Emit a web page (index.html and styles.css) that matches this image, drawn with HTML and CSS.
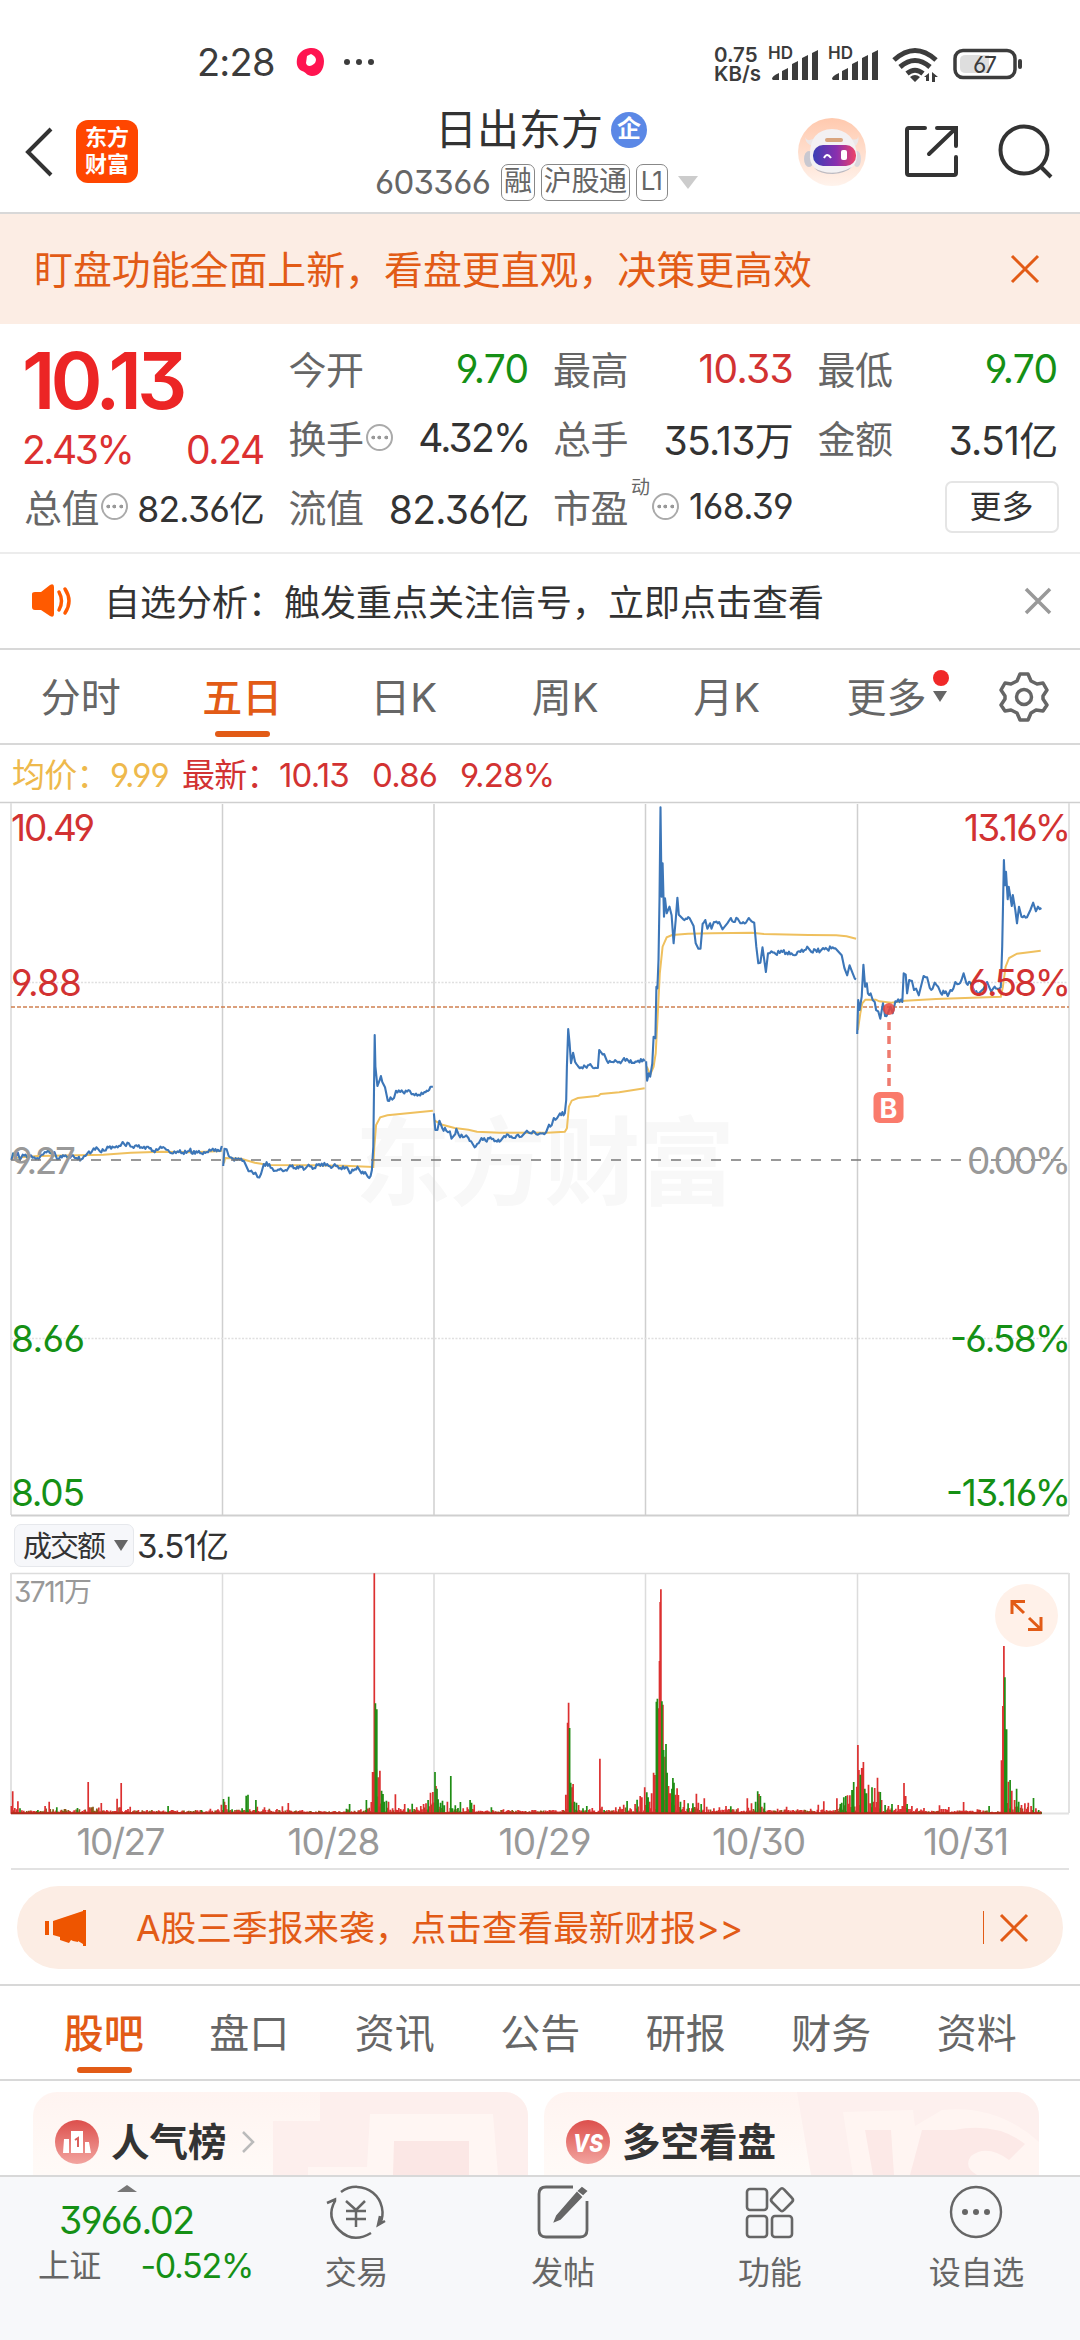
FILE: index.html
```html
<!DOCTYPE html>
<html lang="zh-CN">
<head>
<meta charset="utf-8">
<title>日出东方 603366</title>
<link rel="stylesheet" href="styles.css">
</head>
<body>
<div class="statusbar">
  <span class="clock">2:28</span>
  <svg class="status-app" width="80" height="36" viewBox="0 0 80 36"><path d="M14 4C22 3 28 9 28 17C28 26 23 32 16 32C11 32 10 28 6 27C2 25 0 21 1 15C2 9 7 5 14 4Z" fill="#ff1450"/><path d="M11 12L15 10C20 13 21 15 19 19C15 23 11 23 10 19Z" fill="#fff"/><g fill="#3c3c3c"><circle cx="51" cy="18" r="3"/><circle cx="63" cy="18" r="3"/><circle cx="75" cy="18" r="3"/></g></svg>
  <div class="netspeed"><span>0.75</span><span>KB/s</span></div>
  <svg class="signals" width="254" height="40" viewBox="0 0 254 40" fill="#3c3c3c">
    <text x="-1" y="16.500" class="hd">HD</text>
    <path d="M3 37q0-3 7-6v7H4zM13 29l6-3v12h-6zM23 22l6-3v19h-6zM33 16l6-3v25h-6zM43 11l6-3v30h-6z"/>
    <text x="59" y="16.500" class="hd">HD</text>
    <path d="M63 37q0-3 7-6v7h-6zM73 29l6-3v12h-6zM83 22l6-3v19h-6zM93 16l6-3v25h-6zM103 11l6-3v30h-6z"/>
    <g fill="none" stroke="#3c3c3c" stroke-width="5"><path d="M125 18Q146 -1 167 18"/><path d="M131 25Q146 12 161 25"/><path d="M138 31.500Q146 25 154 31.500" /></g>
    <path d="M141 35q5-4 10 0l-5 5zM160 31v8h-3v-4h-2zM163 30l6 5h-3v5h-3z"/>
    <rect x="186" y="8.500" width="60" height="27" rx="8" fill="none" stroke="#3c3c3c" stroke-width="3.500"/>
    <path d="M197 13h23v18h-23q-6 0-6-5v-8q0-5 6-5z" fill="#dedede"/>
    <rect x="249" y="17" width="4" height="10" rx="2"/>
    <text x="204" y="31" class="batt">67</text>
  </svg>
</div>

<header class="header">
  <svg class="back" width="28" height="50" viewBox="0 0 28 50"><path d="M26 2L3 25L26 48" fill="none" stroke="#333" stroke-width="4"/></svg>
  <div class="brand">东方<br>财富</div>
  <div class="heading">
    <div class="title">日出东方<span class="corp">企</span></div>
    <div class="sub"><span class="code">603366</span><span class="tag">融</span><span class="tag">沪股通</span><span class="tag tag-l1">L1</span><i class="drop"></i></div>
  </div>
  <svg class="robot" width="68" height="68" viewBox="0 0 68 68">
    <defs><linearGradient id="rb" x1="0" y1="0" x2="0" y2="1"><stop offset="0" stop-color="#ffc9ae"/><stop offset="1" stop-color="#fff3ec"/></linearGradient><linearGradient id="rv"><stop offset="0" stop-color="#3a3fb5"/><stop offset=".55" stop-color="#8a2fae"/><stop offset="1" stop-color="#ee4468"/></linearGradient></defs>
    <circle cx="34" cy="34" r="34" fill="url(#rb)"/>
    <path d="M7 19q2 5 8 2v7q-7-1-8-9zM60 17q1 6-7 4l3 8q6-4 4-12z" fill="#ece7e8"/>
    <ellipse cx="11" cy="41" rx="5" ry="8" fill="#c9c8d0"/><ellipse cx="59" cy="41" rx="4" ry="8" fill="#d9d6dc"/>
    <path d="M12 36Q12 12 34 11Q56 12 59 36Q60 54 35 55Q10 54 12 36Z" fill="#f3f1f3"/>
    <path d="M16 50Q34 60 54 49Q48 55 35 56Q22 56 16 50Z" fill="#bdbbc2"/>
    <rect x="15" y="27" width="43" height="21" rx="10" fill="url(#rv)"/><rect x="27" y="20" width="18" height="4" rx="2" fill="#d9a57f"/>
    <path d="M26 40q3-6 7 0" fill="none" stroke="#fff" stroke-width="2"/><rect x="43" y="32" width="6" height="10" rx="2" fill="#fff"/>
  </svg>
  <svg class="share" width="54" height="54" viewBox="0 0 54 54"><path d="M21 3H5Q3 3 3 5V48Q3 50 5 50H50Q52 50 52 48V32M33 3H52V21M51 4L25 29" fill="none" stroke="#333" stroke-width="4" stroke-linecap="round"/></svg>
  <svg class="search" width="56" height="56" viewBox="0 0 56 56"><circle cx="26" cy="26" r="23.500" fill="none" stroke="#333" stroke-width="4"/><path d="M42 42L53 53" stroke="#333" stroke-width="4"/></svg>
</header>

<div class="banner"><span class="banner-text">盯盘功能全面上新，看盘更直观，决策更高效</span><svg width="30" height="30" viewBox="0 0 30 30"><path d="M2 2L28 28M28 2L2 28" stroke="#e25b16" stroke-width="3"/></svg></div>

<section class="quote">
  <div class="lead"><div class="price">10.13</div><div class="change"><span class="pct">2.43%</span><span>0.24</span></div></div>
  <div class="stat"><span class="k">今开</span><span class="v down">9.70</span></div>
  <div class="stat"><span class="k">最高</span><span class="v up">10.33</span></div>
  <div class="stat"><span class="k">最低</span><span class="v down">9.70</span></div>
  <div class="stat"><span class="k">换手</span><i class="info"></i><span class="v tight">4.32%</span></div>
  <div class="stat"><span class="k">总手</span><span class="v">35.13万</span></div>
  <div class="stat"><span class="k">金额</span><span class="v">3.51亿</span></div>
  <div class="stat"><span class="k">总值</span><i class="info"></i><span class="v small">82.36亿</span></div>
  <div class="stat"><span class="k">流值</span><span class="v">82.36亿</span></div>
  <div class="stat"><span class="k">市盈</span><sup class="dyn">动</sup><i class="info"></i><span class="v small">168.39</span></div>
  <div class="stat"><span class="more">更多</span></div>
</section>

<div class="alert">
  <svg width="42" height="34" viewBox="0 0 42 34"><path d="M1 10Q1 8 4 8H10L19 1Q23-1 23 3V30Q23 34 19 32L10 26H4Q1 26 1 23Z" fill="#ff5a00"/><path d="M28 8Q33 17 28 26M34 5Q42 17 34 29" fill="none" stroke="#ff5a00" stroke-width="3.500" stroke-linecap="round"/></svg>
  <span class="alert-text">自选分析：触发重点关注信号，立即点击查看</span>
  <svg width="28" height="28" viewBox="0 0 28 28"><path d="M2 2L26 26M26 2L2 26" stroke="#999" stroke-width="3.500"/></svg>
</div>

<nav class="periods">
  <span class="tab">分时</span><span class="tab active">五日</span><span class="tab">日K</span><span class="tab">周K</span><span class="tab">月K</span>
  <span class="tab tab-more">更多<i class="dot"></i><i class="tri"></i></span>
  <svg class="gear" width="50" height="50" viewBox="0 0 50 50" fill="none" stroke="#666" stroke-width="3.500" stroke-linejoin="round"><path d="M21 2H29L32 9L38 12L44 11L48 18L44 24V27L48 33L44 39L37 38L32 41L29 48H21L18 41L12 38L6 39L2 33L6 27V24L2 18L6 11L12 12L18 9Z"/><circle cx="25" cy="25" r="7.500"/></svg>
</nav>

<div class="legend"><span class="avg">均价：</span><span class="avg n1">9.99</span><span class="up n2">最新：</span><span class="up n3">10.13</span><span class="up n4">0.86</span><span class="up n5">9.28%</span></div>

<svg class="price-chart" width="1080" height="716" viewBox="0 802 1080 716">
  <g class="mark"><text x="355" y="1197" textLength="380">东方财富</text></g>
  <path d="M0 802.500H1080" class="grid dark"/>
  <path d="M11 803V1515M1069 803V1515" class="edge"/>
  <path d="M222.500 804V1515M434 804V1515M645.500 804V1515M857.500 804V1515" class="grid dark"/>
  <path d="M11 1515.500H1069" class="grid dark wide"/>
  <path d="M11 982.500H1069M11 1338.500H1069" class="grid dots"/>
  <path d="M11 1007H1069" class="last"/>
  <g id="avg"></g><g id="price"></g>
  <path d="M11 1160H1069" class="zero"/>
  <circle cx="889" cy="1009" r="6" fill="#e8453c" opacity=".85"/>
  <path d="M889 1022V1094" stroke="#ee7b6f" stroke-width="3.500" stroke-dasharray="8 6"/>
  <rect x="873.500" y="1092" width="30" height="31" rx="6" fill="#fa7b6c"/>
  <text x="879.500" y="1117.500" class="buy">B</text>
  <g class="axis up-t"><text x="11" y="841" textLength="84">10.49</text><text x="11" y="996" textLength="71">9.88</text><text x="964" y="841" textLength="107">13.16%</text><text x="968" y="996" textLength="103">6.58%</text></g>
  <g class="axis flat-t"><text x="11" y="1173.500" textLength="65">9.27</text><text x="967" y="1173.500" textLength="104">0.00%</text></g>
  <g class="axis down-t"><text x="11" y="1351.500" textLength="74">8.66</text><text x="950" y="1351.500" textLength="121">-6.58%</text><text x="11" y="1506" textLength="74">8.05</text><text x="946" y="1506" textLength="125">-13.16%</text></g>
</svg>

<div class="volume-head"><span class="chip"><span>成交额</span><i class="tri"></i></span><span class="vol-value">3.51亿</span></div>

<svg class="volume-chart" width="1080" height="298" viewBox="0 1573 1080 298">
  <path d="M11 1573.500H1069M222.500 1573V1813M434 1573V1813M645.500 1573V1813M857.500 1573V1813" class="grid"/>
  <path d="M11 1573V1813M1069 1573V1813M11 1813.500H1069M11 1869H1069" class="edge"/>
  <g id="volume"></g>
  <text x="14" y="1602" textLength="78" class="vmax">3711万</text>
  <g class="dates" text-anchor="middle"><text x="121" y="1855" textLength="89">10/27</text><text x="334" y="1855" textLength="93">10/28</text><text x="545" y="1855" textLength="93">10/29</text><text x="759" y="1855" textLength="94">10/30</text><text x="966" y="1855" textLength="86">10/31</text></g>
  <circle cx="1026.500" cy="1615.500" r="31.500" fill="#fff1e9"/>
  <path d="M1012 1614V1601.500H1025M1012.500 1602L1024 1613M1041 1617V1629.500H1028M1040.500 1629L1029 1618" fill="none" stroke="#e25b16" stroke-width="3"/>
</svg>

<div class="promo">
  <svg width="42" height="36" viewBox="0 0 42 36" fill="#ee5500"><path d="M0 11H4V25H0zM8 11L38 1V0H41V36H38V34L33 31V32L28 31L26 30L24 33L15 30V27L8 25Z"/></svg>
  <span class="promo-text">A股三季报来袭，点击查看最新财报&gt;&gt;</span>
  <i class="sep"></i>
  <svg width="30" height="30" viewBox="0 0 30 30"><path d="M2 2L28 28M28 2L2 28" stroke="#e25b16" stroke-width="3"/></svg>
</div>

<nav class="sections"><span class="tab active">股吧</span><span class="tab">盘口</span><span class="tab">资讯</span><span class="tab">公告</span><span class="tab">研报</span><span class="tab">财务</span><span class="tab">资料</span></nav>

<div class="cards">
  <div class="card">
    <svg class="deco" width="255" height="83" viewBox="0 0 255 83"><path d="M47 0H255V83H0V29H47Z" fill="#fdefed"/><path d="M97 22H220L225 83H35V75H94Z" fill="#fff6f3"/><path d="M121 49H196V83H120Z" fill="#fbe7e5"/></svg>
    <svg class="badge" width="44" height="44" viewBox="0 0 44 44"><defs><linearGradient id="cg" x1="0" y1="0" x2="0" y2="1"><stop offset="0" stop-color="#dc4f4c"/><stop offset="1" stop-color="#f2a49f"/></linearGradient></defs><circle cx="22" cy="22" r="22" fill="url(#cg)"/><path d="M8 33L9 19H14V33ZM16 33V11H28V33ZM30 33V22H34L36 33Z" fill="#fff"/><path d="M20 20L23 18V27" fill="none" stroke="#d9605c" stroke-width="2"/></svg>
    <span class="card-title">人气榜</span>
    <svg class="chev" width="14" height="24" viewBox="0 0 14 24"><path d="M2 2L12 12L2 22" fill="none" stroke="#bbb" stroke-width="2.500"/></svg>
  </div>
  <div class="card">
    <svg class="deco" width="242" height="83" viewBox="0 0 242 83"><path d="M0 0H242V83H14Z" fill="#fdf0ee"/><path d="M46 20L116 18L118 34L145 18Q200 12 242 50V83H56Z" fill="#fff5f2"/><path d="M68 38H94L97 83H76ZM125 38H157Q200 30 228 52L212 68Q190 52 174 64Q166 75 180 83H113Z" fill="#fce9e7"/></svg>
    <svg class="badge" width="44" height="44" viewBox="0 0 44 44"><circle cx="22" cy="22" r="22" fill="url(#cg)"/><text x="7" y="32" class="vs" textLength="30" lengthAdjust="spacingAndGlyphs">VS</text></svg>
    <span class="card-title">多空看盘</span>
  </div>
</div>

<footer class="footer">
  <div class="index"><i class="up-tri"></i><div class="index-value">3966.02</div><div class="index-row"><span>上证</span><span class="index-pct">-0.52%</span></div></div>
  <div class="action"><svg width="64" height="56" viewBox="0 0 64 56" fill="none" stroke="#666" stroke-width="2.500"><path d="M17 8A26 26 0 0 1 56 40M3 19L11 15.500V17Q2 33 15 46Q29 60 47 49M61 37L54 41L56 32M22 17L32 26L41 17M32 26V43M22 27H42M22 35H42"/></svg><span>交易</span></div>
  <div class="action"><svg width="56" height="56" viewBox="0 0 56 56" fill="none" stroke="#666" stroke-width="2.800"><path d="M38 3H11Q4 3 4 10V46Q4 53 11 53H45Q52 53 52 46V17"/><path d="M47 4L51 7L48 10L44 7ZM42 9L46 13L25 35L20 37L22 32Z" fill="#666" stroke-width="2"/></svg><span>发帖</span></div>
  <div class="action"><svg width="56" height="56" viewBox="0 0 56 56" fill="none" stroke="#666" stroke-width="2.600"><rect x="5" y="5" width="20" height="21" rx="3"/><rect x="5" y="32" width="20" height="21" rx="3"/><rect x="30" y="32" width="20" height="21" rx="3"/><path d="M38 5.500Q40 3 42 5.500L50 14Q52 16 50 18L42 26Q40 28.500 38 26L30 18Q28 16 30 14Z"/></svg><span>功能</span></div>
  <div class="action"><svg width="56" height="56" viewBox="0 0 56 56"><circle cx="28" cy="28" r="25" fill="none" stroke="#666" stroke-width="2.400"/><g fill="#666"><circle cx="17" cy="28" r="3"/><circle cx="28" cy="28" r="3"/><circle cx="39" cy="28" r="3"/></g></svg><span>设自选</span></div>
</footer>
<script src="chart.js"></script>
</body>
</html>
```
FILE: styles.css
```css
* { box-sizing: border-box; }
body { margin: 0; width: 1080px; height: 2340px; overflow: hidden; background: #fff; color: #333; font-family: Inter, "Noto Sans CJK SC", sans-serif; font-feature-settings: "cv03", "cv04", "cv09"; display: flex; flex-direction: column; }
body > * { flex: none; }
svg { display: block; flex: none; overflow: visible; }
i { font-style: normal; display: block; flex: none; }
.up { color: #d23232; }
.down { color: #159015; }

.statusbar { height: 100px; padding: 24px 56px 0 197px; display: flex; align-items: center; color: #3c3c3c; }
.clock { font-size: 38px; line-height: 76px; width: 99px; letter-spacing: -0.8px; }
.netspeed { margin: 4px 0 0 338px; width: 55px; display: flex; flex-direction: column; font-size: 20.5px; line-height: 19.500px; font-weight: 600; }
.hd { font-size: 17px; font-weight: 600; }
.batt { font-size: 23px; letter-spacing: -1.5px; }

.header { height: 114px; border-bottom: 2px solid #d8d8d8; display: flex; align-items: flex-start; padding-left: 25px; }
.back { margin-top: 27px; }
.brand { margin: 20px 0 0 23px; width: 62px; height: 63px; border-radius: 12px; background: #ff4600; color: #fff; font-size: 22px; font-weight: 700; line-height: 27px; padding-top: 4px; text-align: center; }
.heading { width: 326px; margin-left: 237px; white-space: nowrap; }
.title { display: flex; align-items: center; font-size: 42px; line-height: 60px; padding-left: 60px; }
.corp { width: 36px; height: 36px; border-radius: 50%; background: #5b88e6; color: #fff; font-size: 24px; line-height: 34px; text-align: center; margin-left: 8px; font-weight: 700; }
.sub { display: flex; align-items: center; height: 44px; gap: 6px; color: #666; }
.code { font-size: 33px; width: 120px; letter-spacing: -0.7px; }
.tag { flex: none; border: 1.5px solid #888; border-radius: 7px; height: 37px; line-height: 32px; font-size: 28px; padding: 0 2px; letter-spacing: -0.3px; }
.tag-l1 { padding: 0 4px; width: 32px; font-size: 26px; letter-spacing: -2px; }
.drop { width: 0; border: 10px solid transparent; border-top: 13px solid #ccc; border-bottom: 0; margin-left: 4px; }
.robot { margin: 18px 0 0 97px; }
.share { margin: 25px 0 0 38px; }
.search { margin: 24px 0 0 40px; }

.banner { height: 110px; background: #fcede4; color: #e25b16; display: flex; align-items: center; justify-content: space-between; padding: 0 40px 0 34px; font-size: 38.9px; }
.banner-text { padding-bottom: 4px; }

.quote { height: 230px; border-bottom: 2px solid #ececec; padding: 10px 0 0 24px; display: grid; grid-template-columns: repeat(4, 240px); column-gap: 24.5px; grid-template-rows: repeat(3, 69px); }
.lead { grid-row: span 2; color: #ec2525; margin-left: -2px; }
.price { height: 92px; line-height: 92px; font-size: 79px; font-weight: 600; letter-spacing: -5px; }
.change { display: flex; justify-content: space-between; line-height: 48px; font-size: 39px; letter-spacing: -1.3px; color: #dc3030; }
.pct { letter-spacing: -2.5px; }
.stat { display: flex; align-items: center; height: 69px; white-space: nowrap; }
.k { font-size: 38px; color: #666; letter-spacing: -0.5px; padding-bottom: 3px; }
.v { margin-left: auto; font-size: 39px; letter-spacing: -0.7px; }
.tight { letter-spacing: -1.8px; margin-right: -1px; }
.small { font-size: 35.500px; letter-spacing: -0.7px; }
.info { width: 27px; height: 27px; border: 2px solid #aaa; border-radius: 50%; margin-left: 2px; background: radial-gradient(circle, #999 1.6px, transparent 2.2px) 50% 50% / 6.500px 7px no-repeat, radial-gradient(circle, #999 1.6px, transparent 2.2px) 2px 50% / 6.500px 7px no-repeat, radial-gradient(circle, #999 1.6px, transparent 2.2px) 15px 50% / 6.500px 7px no-repeat; }
.dyn { font-size: 19px; color: #666; margin: -38px 0 0 3px; line-height: 20px; }
.more { margin: 0 -1px 0 auto; width: 114px; height: 52px; line-height: 47px; border: 2px solid #e5e5e5; border-radius: 7px; text-align: center; font-size: 32px; }

.alert { height: 96px; border-bottom: 2px solid #d8d8d8; display: flex; align-items: center; padding: 0 28px 0 31px; font-size: 36px; }
.alert-text { margin-left: 31px; margin-right: auto; padding-bottom: 3px; }
.periods { height: 95px; border-bottom: 2px solid #d8d8d8; display: flex; align-items: flex-start; color: #666; }
.tab { position: relative; line-height: 95px; height: 93px; width: 161.5px; text-align: center; font-size: 40px; }
.active { color: #e25b16; font-weight: 500; }
.active::after { content: ""; position: absolute; left: 50%; margin-left: -27px; bottom: 6px; width: 55px; height: 6px; border-radius: 3px; background: #e25b16; }
.tab-more { text-align: left; padding-left: 39px; width: 191px; }
.tri { width: 0; border: 7.5px solid transparent; border-top: 11px solid #666; border-bottom: 0; }
.tab-more .tri { position: absolute; left: 125px; top: 41px; }
.dot { position: absolute; left: 125px; top: 20px; width: 16px; height: 16px; border-radius: 50%; background: #f02828; }
.gear { margin-top: 22px; }

.legend { height: 57px; display: flex; padding-left: 12px; line-height: 60px; font-size: 33px; letter-spacing: -0.8px; white-space: nowrap; }
.legend > span { flex: none; }
.avg { color: #eeb94c; width: 98px; }
.n1 { width: 72px; } .n2 { width: 97px; } .n3 { width: 93px; } .n4 { width: 88px; }

.grid { fill: none; stroke: #dcdcdc; stroke-width: 1.5; }
.dark { stroke: #cfcfcf; }
.wide { stroke-width: 2; }
.dots { stroke: #e0e0e0; stroke-dasharray: 2 1.5; }
.edge { fill: none; stroke: #e2e2e2; stroke-width: 2; }
.last { stroke: #d08050; stroke-width: 1.5; stroke-dasharray: 4 2; }
.zero { stroke: #777; stroke-width: 1.7; stroke-dasharray: 10 10; }
.mark text { font-size: 96px; font-weight: 700; fill: #f8f8f8; }
.buy { font-size: 27px; font-weight: 700; fill: #fff; }
.axis text { font-size: 37px; }
.up-t { fill: #d23232; } .flat-t { fill: #999; } .down-t { fill: #159015; }
#price polyline { fill: none; stroke: #3c76b8; stroke-width: 2.1; stroke-linejoin: round; }
#avg polyline { fill: none; stroke: #efc05e; stroke-width: 2; }

.volume-head { height: 55px; display: flex; align-items: center; padding-left: 14px; font-size: 33px; }
.chip { display: flex; align-items: center; width: 120px; height: 43px; background: #f6f7fa; border: 1.5px solid #e6e8ec; border-radius: 7px; font-size: 29px; letter-spacing: -2px; padding-left: 8px; }
.chip span { padding-bottom: 4px; }
.chip .tri { margin-left: 10px; }
.vol-value { margin-left: 3px; letter-spacing: -0.8px; padding-bottom: 4px; }
.vmax { font-size: 28px; fill: #999; }
.dates { font-size: 37px; fill: #999; }

.promo { margin: 15px 17px 0; height: 83px; border-radius: 42px; background: #fcede4; color: #e25b16; display: flex; align-items: center; padding: 0 34px 0 28px; font-size: 35.7px; }
.promo-text { margin: 0 auto 0 49px; padding-bottom: 4px; }
.sep { width: 1.5px; height: 33px; background: #e25b16; margin-right: 15px; }
.sections { margin-top: 15px; height: 97px; border-top: 2px solid #d8d8d8; border-bottom: 2px solid #d8d8d8; display: flex; padding-left: 31px; color: #666; }
.sections .tab { width: 145.5px; }
.cards { height: 94px; overflow: hidden; display: flex; gap: 16px; padding: 11px 33px 0; }
.card { position: relative; width: 495px; height: 110px; overflow: hidden; border-radius: 24px; background: linear-gradient(#fff4f1, #fffaf7 80px); display: flex; align-items: flex-start; padding: 28px 22px; }
.deco { position: absolute; right: 0; top: 0; }
.badge { position: relative; }
.vs { font-size: 25px; font-weight: 800; font-style: italic; fill: #fff; }
.card-title { position: relative; font-size: 38.5px; line-height: 44px; font-weight: 600; margin-left: 12px; }
.chev { position: relative; margin: 10px 0 0 14px; }
.footer { height: 166px; background: #f7f8fa; border-top: 2px solid #d8d8d8; display: flex; color: #666; }
.index { width: 253px; }
.up-tri { width: 0; border: 10px solid transparent; border-bottom: 7px solid #777; border-top: 0; margin: 8px 0 0 117px; }
.index-value { color: #159015; font-size: 37.5px; line-height: 44px; margin: 7px 0 0 59px; letter-spacing: -1.4px; }
.index-row { display: flex; justify-content: space-between; line-height: 46px; font-size: 32px; margin-left: 38px; letter-spacing: -0.8px; }
.index-pct { color: #159015; font-size: 34px; letter-spacing: -1.3px; }
.action { width: 206.7px; padding-top: 7px; display: flex; flex-direction: column; align-items: center; font-size: 32px; }
.action span { line-height: 46px; margin-top: 10px; letter-spacing: -0.3px; }
```
FILE: chart.js
```js
// Prices and volumes are [x, y] samples on a 3136-unit wide sheet.
const SX = 1080 / 3136, SY = 1 / 3;
const NS = 'http://www.w3.org/2000/svg';
let seed = 7;
const rnd = () => (seed = (seed * 16807) % 2147483647) / 2147483647;
const pairs = s => s.trim().split(/\s+/).map(p => p.split(',').map((v, i) => i < 2 ? +v : v));

const priceDays = [
  [0, '33,1080 38,1060 45,1072 52,1058 58,1080 66,1064 78,1072 90,1066 100,1072 112,1078 120,1064 130,1056 140,1050 148,1060 158,1056 166,1078 176,1068 190,1066 200,1070 212,1066 222,1074 236,1078 248,1068 258,1054 266,1056 272,1045 284,1046 290,1054 302,1052 312,1040 330,1042 350,1038 356,1026 362,1034 374,1030 384,1040 396,1036 410,1042 430,1040 445,1052 458,1050 466,1040 478,1044 488,1050 498,1060 515,1054 530,1058 545,1054 553,1046 556,1060 570,1054 585,1060 600,1056 612,1052 618,1046 640,1052 644,1038'],
  [0, '648,1098 652,1046 658,1048 664,1068 676,1076 700,1076 708,1082 714,1096 722,1114 730,1112 736,1122 742,1118 748,1132 758,1122 766,1092 782,1092 790,1104 800,1112 815,1106 822,1114 836,1106 842,1096 856,1104 870,1098 886,1106 896,1094 912,1104 926,1092 950,1092 962,1104 972,1092 988,1104 1008,1102 1016,1120 1030,1108 1038,1100 1046,1114 1060,1116 1068,1130 1076,1128 1080,1110 1084,1040 1088,705 1090,800 1096,858 1102,842 1106,828 1110,846 1118,862 1126,902 1134,892 1144,894 1150,872 1170,876 1190,872 1200,882 1216,884 1232,876 1246,870 1250,860 1257,860'],
  [0, '1260,940 1264,990 1270,990 1276,962 1284,984 1296,992 1306,994 1311,1016 1322,1002 1325,986 1332,1004 1344,1012 1354,1006 1360,1014 1368,1024 1378,1042 1390,1030 1398,1014 1410,1022 1424,1012 1440,1022 1454,1022 1464,1008 1476,1004 1492,1014 1504,1004 1514,1010 1530,992 1540,1000 1552,996 1562,1004 1568,1000 1576,1000 1586,996 1594,974 1602,976 1608,954 1618,954 1626,940 1640,940 1644,900 1646,800 1650,687 1654,730 1658,790 1664,758 1670,786 1678,798 1688,802 1700,800 1714,792 1722,804 1736,804 1740,750 1746,758 1754,762 1762,782 1778,786 1790,784 1802,790 1812,774 1824,782 1838,788 1853,782 1872,784'],
  [1568, '308,784 311,842 316,820 320,830 326,790 330,710 335,715 338,560 341,565 344,480 347,300 350,22 353,290 356,190 360,350 363,295 368,340 376,320 382,346 388,430 394,360 399,293 403,344 416,358 434,354 446,378 452,430 460,446 466,446 472,372 480,360 486,386 494,370 498,386 505,366 520,366 530,388 544,370 554,354 562,366 574,356 582,370 598,368 606,354 614,364 622,368 628,440 634,490 640,488 646,442 656,516 662,460 672,454 684,462 700,452 716,458 730,460 740,466 752,454 768,450 776,440 788,456 800,450 815,452 822,444 834,448 850,442 862,450 876,466 884,504 892,526 899,496 908,520 914,536 918,538'],
  [1568, '921,702 924,600 928,630 934,590 939,494 944,560 949,550 952,580 960,580 966,600 972,606 976,630 982,634 988,656 996,610 1002,648 1010,640 1018,620 1024,640 1032,604 1040,598 1052,606 1056,520 1062,524 1066,580 1072,540 1080,542 1086,570 1092,566 1100,586 1106,560 1114,528 1124,532 1132,564 1140,566 1146,548 1156,560 1164,580 1178,574 1184,588 1192,570 1200,566 1206,546 1216,552 1224,540 1230,520 1238,550 1250,548 1260,570 1274,580 1288,566 1298,546 1310,574 1320,560 1328,566 1338,562 1342,440 1347,180 1350,256 1353,215 1358,298 1361,260 1370,318 1373,285 1380,330 1385,370 1391,320 1398,350 1414,352 1424,330 1432,308 1440,334 1446,320 1456,324']
];
const avgDays = [
  [0, '33,1074 110,1068 230,1066 300,1064 380,1058 470,1055 560,1057 644,1053'],
  [0, '650,1090 654,1074 700,1076 740,1088 780,1095 900,1096 1000,1097 1084,1101 1087,1040 1092,975 1104,952 1125,946 1257,932'],
  [0, '1262,962 1284,974 1320,984 1360,989 1385,995 1450,998 1588,998 1640,995 1646,985 1652,920 1660,902 1678,894 1738,887 1744,882 1798,877 1872,865'],
  [1568, '310,800 320,824 330,800 336,760 342,640 348,520 356,440 368,412 384,405 430,401 500,400 615,398 650,402 780,405 860,406 890,409 918,416'],
  [1568, '923,690 930,640 936,610 945,599 975,599 985,604 1020,608 1060,602 1150,597 1338,590 1344,560 1352,500 1362,474 1385,461 1420,457 1454,452']
];

function line(target, dx, text, jitter) {
  const src = pairs(text), out = [];
  src.forEach((p, i) => {
    out.push(p);
    const n = src[i + 1];
    if (jitter && n && n[0] - p[0] > 7 && Math.abs(n[1] - p[1]) < 14) {
      const steps = Math.floor((n[0] - p[0]) / 3.5);
      for (let k = 1; k < steps; k++) {
        const t = k / steps;
        out.push([p[0] + (n[0] - p[0]) * t, p[1] + (n[1] - p[1]) * t + (k % 2 ? 1 : -1) * rnd() * 6]);
      }
    }
  });
  const el = document.createElementNS(NS, 'polyline');
  el.setAttribute('points', out.map(p => ((p[0] + dx) * SX).toFixed(1) + ',' + (800 + p[1] * SY).toFixed(1)).join(' '));
  document.getElementById(target).append(el);
}
avgDays.forEach(d => line('avg', d[0], d[1], false));
priceDays.forEach(d => line('price', d[0], d[1], true));

const volLeft = '33,918,r 37,874,r 43,924,r 52,904,r 58,925,g 110,930,g 131,918,r 143,905,r 165,922,g 225,924,g 256,846,r 294,909,r 310,930,r 340,896,r 352,849,r 378,920,r 402,930,r 488,918,g 498,930,r 585,930,g 611,926,r 633,928,r 643,914,r 649,897,g 652,905,r 656,915,r 664,890,g 674,928,g 703,925,g 715,887,g 720,884,g 725,928,r 743,900,g 747,920,r 768,922,r 820,919,r 837,909,r 878,930,r 942,934,r 1006,926,g 1015,912,g 1048,928,r 1064,900,g 1078,906,r 1082,816,r 1087,220,r 1090,610,g 1094,628,g 1098,832,r 1103,812,r 1108,872,g 1112,882,g 1116,905,g 1122,902,g 1128,905,r 1140,925,r 1148,883,r 1158,924,r 1175,912,r 1185,925,g 1197,911,g 1210,922,r 1222,918,r 1230,912,r 1237,910,r 1243,900,g 1250,878,r 1257,876,r 1263,816,g 1266,858,r 1269,866,g 1272,898,g 1279,908,g 1285,902,g 1290,916,g 1299,905,r 1309,828,g 1314,925,g 1322,916,g 1330,924,g 1337,906,g 1345,925,r 1357,922,r 1365,900,g 1369,908,g 1377,914,r 1390,932,r 1427,922,g 1462,928,r 1504,930,r 1545,930,r';
const volRight = '38,930,r 65,930,r 75,884,r 80,668,r 83,608,r 86,684,g 89,848,g 93,862,r 96,852,r 100,905,g 106,908,g 112,915,r 125,925,g 136,918,g 152,924,r 170,932,r 174,776,r 180,920,r 186,930,g 220,922,r 232,920,r 243,914,r 253,903,g 262,925,r 276,912,r 282,899,g 291,888,r 296,892,r 304,862,r 310,877,g 314,892,g 318,905,r 324,880,r 330,818,r 334,825,r 338,605,g 341,596,g 344,625,r 347,483,r 349,306,r 351,268,r 354,604,g 357,614,r 359,750,g 363,770,r 366,732,g 369,818,g 373,858,r 378,880,r 383,866,g 386,834,g 389,848,g 393,884,r 398,865,r 402,885,r 408,905,g 419,900,r 430,910,g 444,910,g 454,881,r 460,908,r 468,912,g 477,895,r 484,920,r 505,925,r 521,922,r 540,918,r 554,919,g 575,925,r 592,932,r 602,895,r 614,910,r 626,905,g 632,874,g 636,882,r 640,888,g 644,920,r 652,908,g 665,930,r 690,926,r 716,920,r 748,928,r 786,926,r 808,914,r 824,904,r 832,930,r 862,895,r 872,912,g 876,908,g 882,892,g 888,888,g 893,886,r 900,886,r 906,870,g 911,846,g 920,860,r 923,735,r 926,810,r 930,824,g 934,804,r 939,786,r 943,866,g 948,880,g 954,854,r 959,910,r 964,862,g 972,864,r 980,833,r 984,875,r 988,876,g 992,900,r 1002,915,g 1012,918,r 1022,912,g 1040,915,r 1052,918,r 1057,849,r 1062,888,r 1066,912,g 1080,918,r 1095,925,r 1115,924,r 1140,934,r 1160,916,r 1187,921,r 1225,932,r 1230,906,r 1235,932,r 1250,932,r 1270,928,r 1304,918,g 1335,935,r 1340,781,r 1344,618,r 1347,438,r 1350,532,g 1355,688,g 1360,845,r 1365,840,g 1370,872,r 1378,900,r 1384,866,g 1390,905,g 1398,915,r 1408,910,r 1418,908,r 1426,918,r 1433,894,g 1440,925,r 1448,930,g 1455,936,g';
const bars = pairs(volLeft).concat(pairs(volRight).map(b => [b[0] + 1568, b[1], b[2]]));
const paths = { r: '', g: '', m: '' };
const bar = (x, y, c) => { paths[c] += 'M' + (x * SX).toFixed(1) + ' 1814V' + (1500 + y * SY).toFixed(1); };
bars.forEach((b, i) => {
  const n = bars[i + 1];
  if (n) for (let x = b[0] + 2.8; x < n[0] - 1; x += 2.8) {
    const low = Math.min(940 - b[1], 940 - n[1]);
    bar(x, 938 - rnd() * (3 + low * 0.5), rnd() < 0.6 ? 'r' : 'm');
  }
  bar(b[0], b[1], b[2]);
});
[['m', '#8a5a18'], ['r', '#dc3030'], ['g', '#1f8d14']].forEach(([k, color]) => {
  const p = document.createElementNS(NS, 'path');
  p.setAttribute('d', paths[k]);
  p.setAttribute('stroke', color);
  p.setAttribute('stroke-width', 1.7);
  document.getElementById('volume').append(p);
});
const base = document.createElementNS(NS, 'path');
base.setAttribute('d', 'M11 1813.300H1041.500');
base.setAttribute('stroke', '#b02a1a');
base.setAttribute('stroke-width', 2);
document.getElementById('volume').append(base);
```
